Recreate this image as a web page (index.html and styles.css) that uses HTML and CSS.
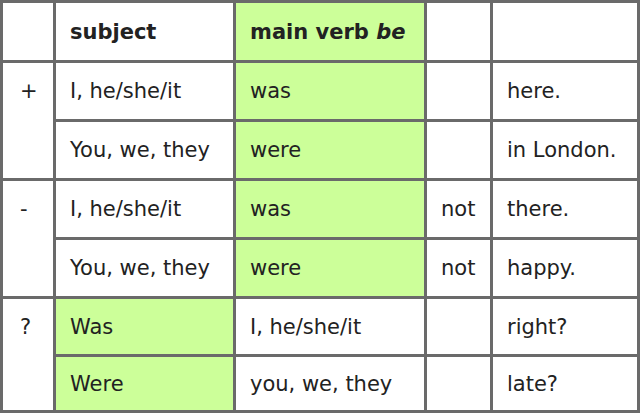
FILE: index.html
```html
<!DOCTYPE html>
<html>
<head>
<meta charset="utf-8">
<link rel="stylesheet" href="styles.css">
</head>
<body>
<table class="grammar">
  <colgroup>
    <col class="c1"><col class="c2"><col class="c3"><col class="c4"><col class="c5">
  </colgroup>
  <tr class="r-head">
    <td></td>
    <td class="head">subject</td>
    <td class="head green">main verb <em>be</em></td>
    <td></td>
    <td></td>
  </tr>
  <tr class="r1">
    <td class="sign" rowspan="2">+</td>
    <td>I, he/she/it</td>
    <td class="green">was</td>
    <td></td>
    <td>here.</td>
  </tr>
  <tr class="r2">
    <td>You, we, they</td>
    <td class="green">were</td>
    <td></td>
    <td>in London.</td>
  </tr>
  <tr class="r3">
    <td class="sign" rowspan="2">-</td>
    <td>I, he/she/it</td>
    <td class="green">was</td>
    <td>not</td>
    <td>there.</td>
  </tr>
  <tr class="r4">
    <td>You, we, they</td>
    <td class="green">were</td>
    <td>not</td>
    <td>happy.</td>
  </tr>
  <tr class="r5">
    <td class="sign" rowspan="2">?</td>
    <td class="green">Was</td>
    <td>I, he/she/it</td>
    <td></td>
    <td>right?</td>
  </tr>
  <tr class="r6">
    <td class="green">Were</td>
    <td>you, we, they</td>
    <td></td>
    <td>late?</td>
  </tr>
</table>
</body>
</html>
```
FILE: styles.css
```css
html, body {
  margin: 0;
  padding: 0;
  background: #ffffff;
}
.grammar {
  border-collapse: collapse;
  table-layout: fixed;
  width: 637px;
  font-family: "DejaVu Sans", Verdana, sans-serif;
  font-size: 21px;
  color: #222222;
}
.c1 { width: 53px; }
.c2 { width: 180px; }
.c3 { width: 191px; }
.c4 { width: 66px; }
.c5 { width: 147px; }
.grammar td {
  border: 3px solid #6a6a6a;
  padding: 0 0 0 14px;
  vertical-align: middle;
  white-space: nowrap;
  line-height: 24px;
}
.grammar .sign {
  vertical-align: top;
  padding-top: 16px;
  padding-left: 17px;
}
.r-head { height: 60px; }
.r1, .r2, .r3, .r4 { height: 59px; }
.r5 { height: 58px; }
.r6 { height: 56px; }
.head { font-weight: bold; }
.head em { font-style: italic; }
.green { background: #ccff99; }
```
